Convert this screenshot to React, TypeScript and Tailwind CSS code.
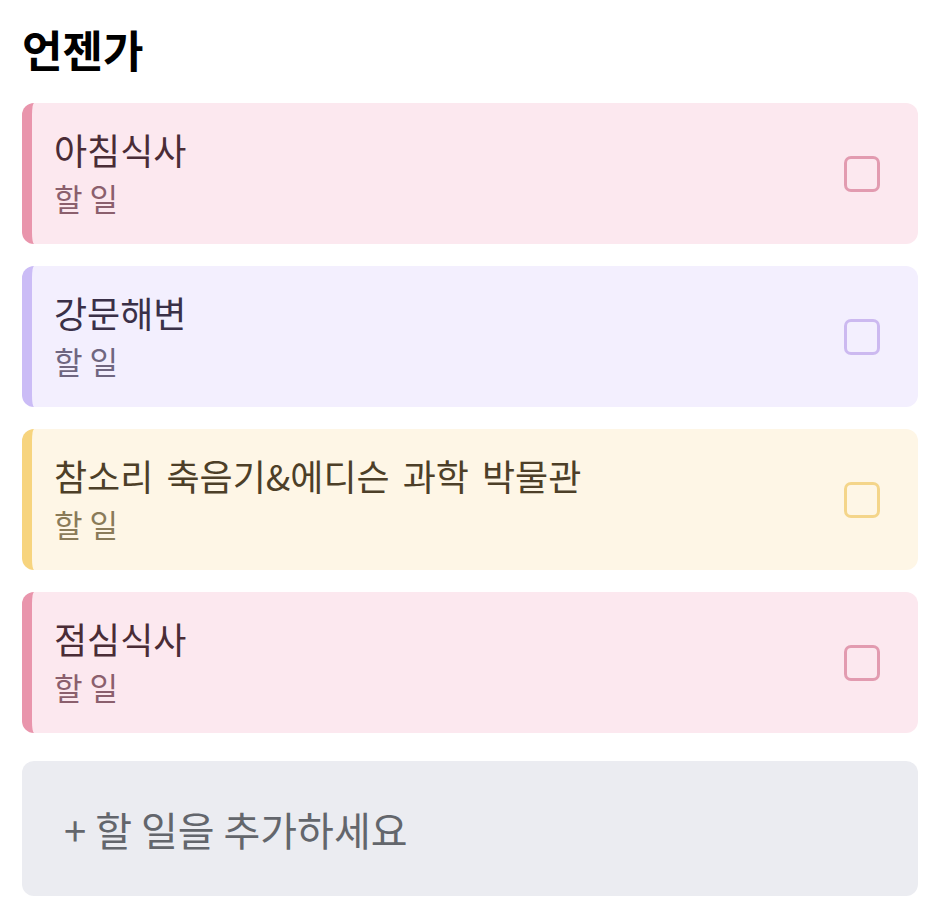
import React from 'react';

type Item = {
    title: string;
    bg: string;
    bar: string;
    text: string;
    sub: string;
    box: string;
};

const items: Item[] = [
    { title: '아침식사', bg: 'bg-[#fce8ef]', bar: 'border-[#e995ac]', text: 'text-[#4a2c36]', sub: 'text-[#8b5f6d]', box: 'border-[#e29bb0]' },
    { title: '강문해변', bg: 'bg-[#f3effe]', bar: 'border-[#cbbcf6]', text: 'text-[#3a3048]', sub: 'text-[#6f6680]', box: 'border-[#ccb9f0]' },
    { title: '참소리 축음기&에디슨 과학 박물관', bg: 'bg-[#fef6e6]', bar: 'border-[#f7d47e]', text: 'text-[#4d3f28]', sub: 'text-[#8a7b59]', box: 'border-[#f4d58a]' },
    { title: '점심식사', bg: 'bg-[#fce8ef]', bar: 'border-[#e995ac]', text: 'text-[#4a2c36]', sub: 'text-[#8b5f6d]', box: 'border-[#e29bb0]' },
];

const App: React.FC = () => {
    return (
        <div className="min-h-screen bg-white pl-[22px] pr-[26px] pt-[20px] font-['Noto_Sans_CJK_KR','Noto_Sans',sans-serif]">
            <h1 className="text-[44px] font-bold leading-[58px] text-black">언젠가</h1>

            <div className="mt-[25px] flex flex-col gap-[22px]">
                {items.map((item) => (
                    <div
                        key={item.title}
                        className={`flex h-[141px] items-center justify-between overflow-hidden rounded-[12px] border-l-[10px] pl-[22px] pr-[38px] ${item.bg} ${item.bar}`}
                    >
                        <div className="pb-[5px]">
                            <p className={`text-[36px] font-normal leading-[52px] [word-spacing:5px] ${item.text}`}>{item.title}</p>
                            <p className={`text-[31px] leading-[45px] ${item.sub}`}>할 일</p>
                        </div>
                        <div className={`h-[36px] w-[36px] shrink-0 rounded-[7px] border-[3px] ${item.box}`} />
                    </div>
                ))}
            </div>

            <div className="mt-[28px] flex h-[135px] items-center rounded-[12px] bg-[#ebecf1] pl-[42px]">
                <span className="text-[40px] leading-[58px] text-[#63666c]">+ 할 일을 추가하세요</span>
            </div>
        </div>
    );
};

export default App;
